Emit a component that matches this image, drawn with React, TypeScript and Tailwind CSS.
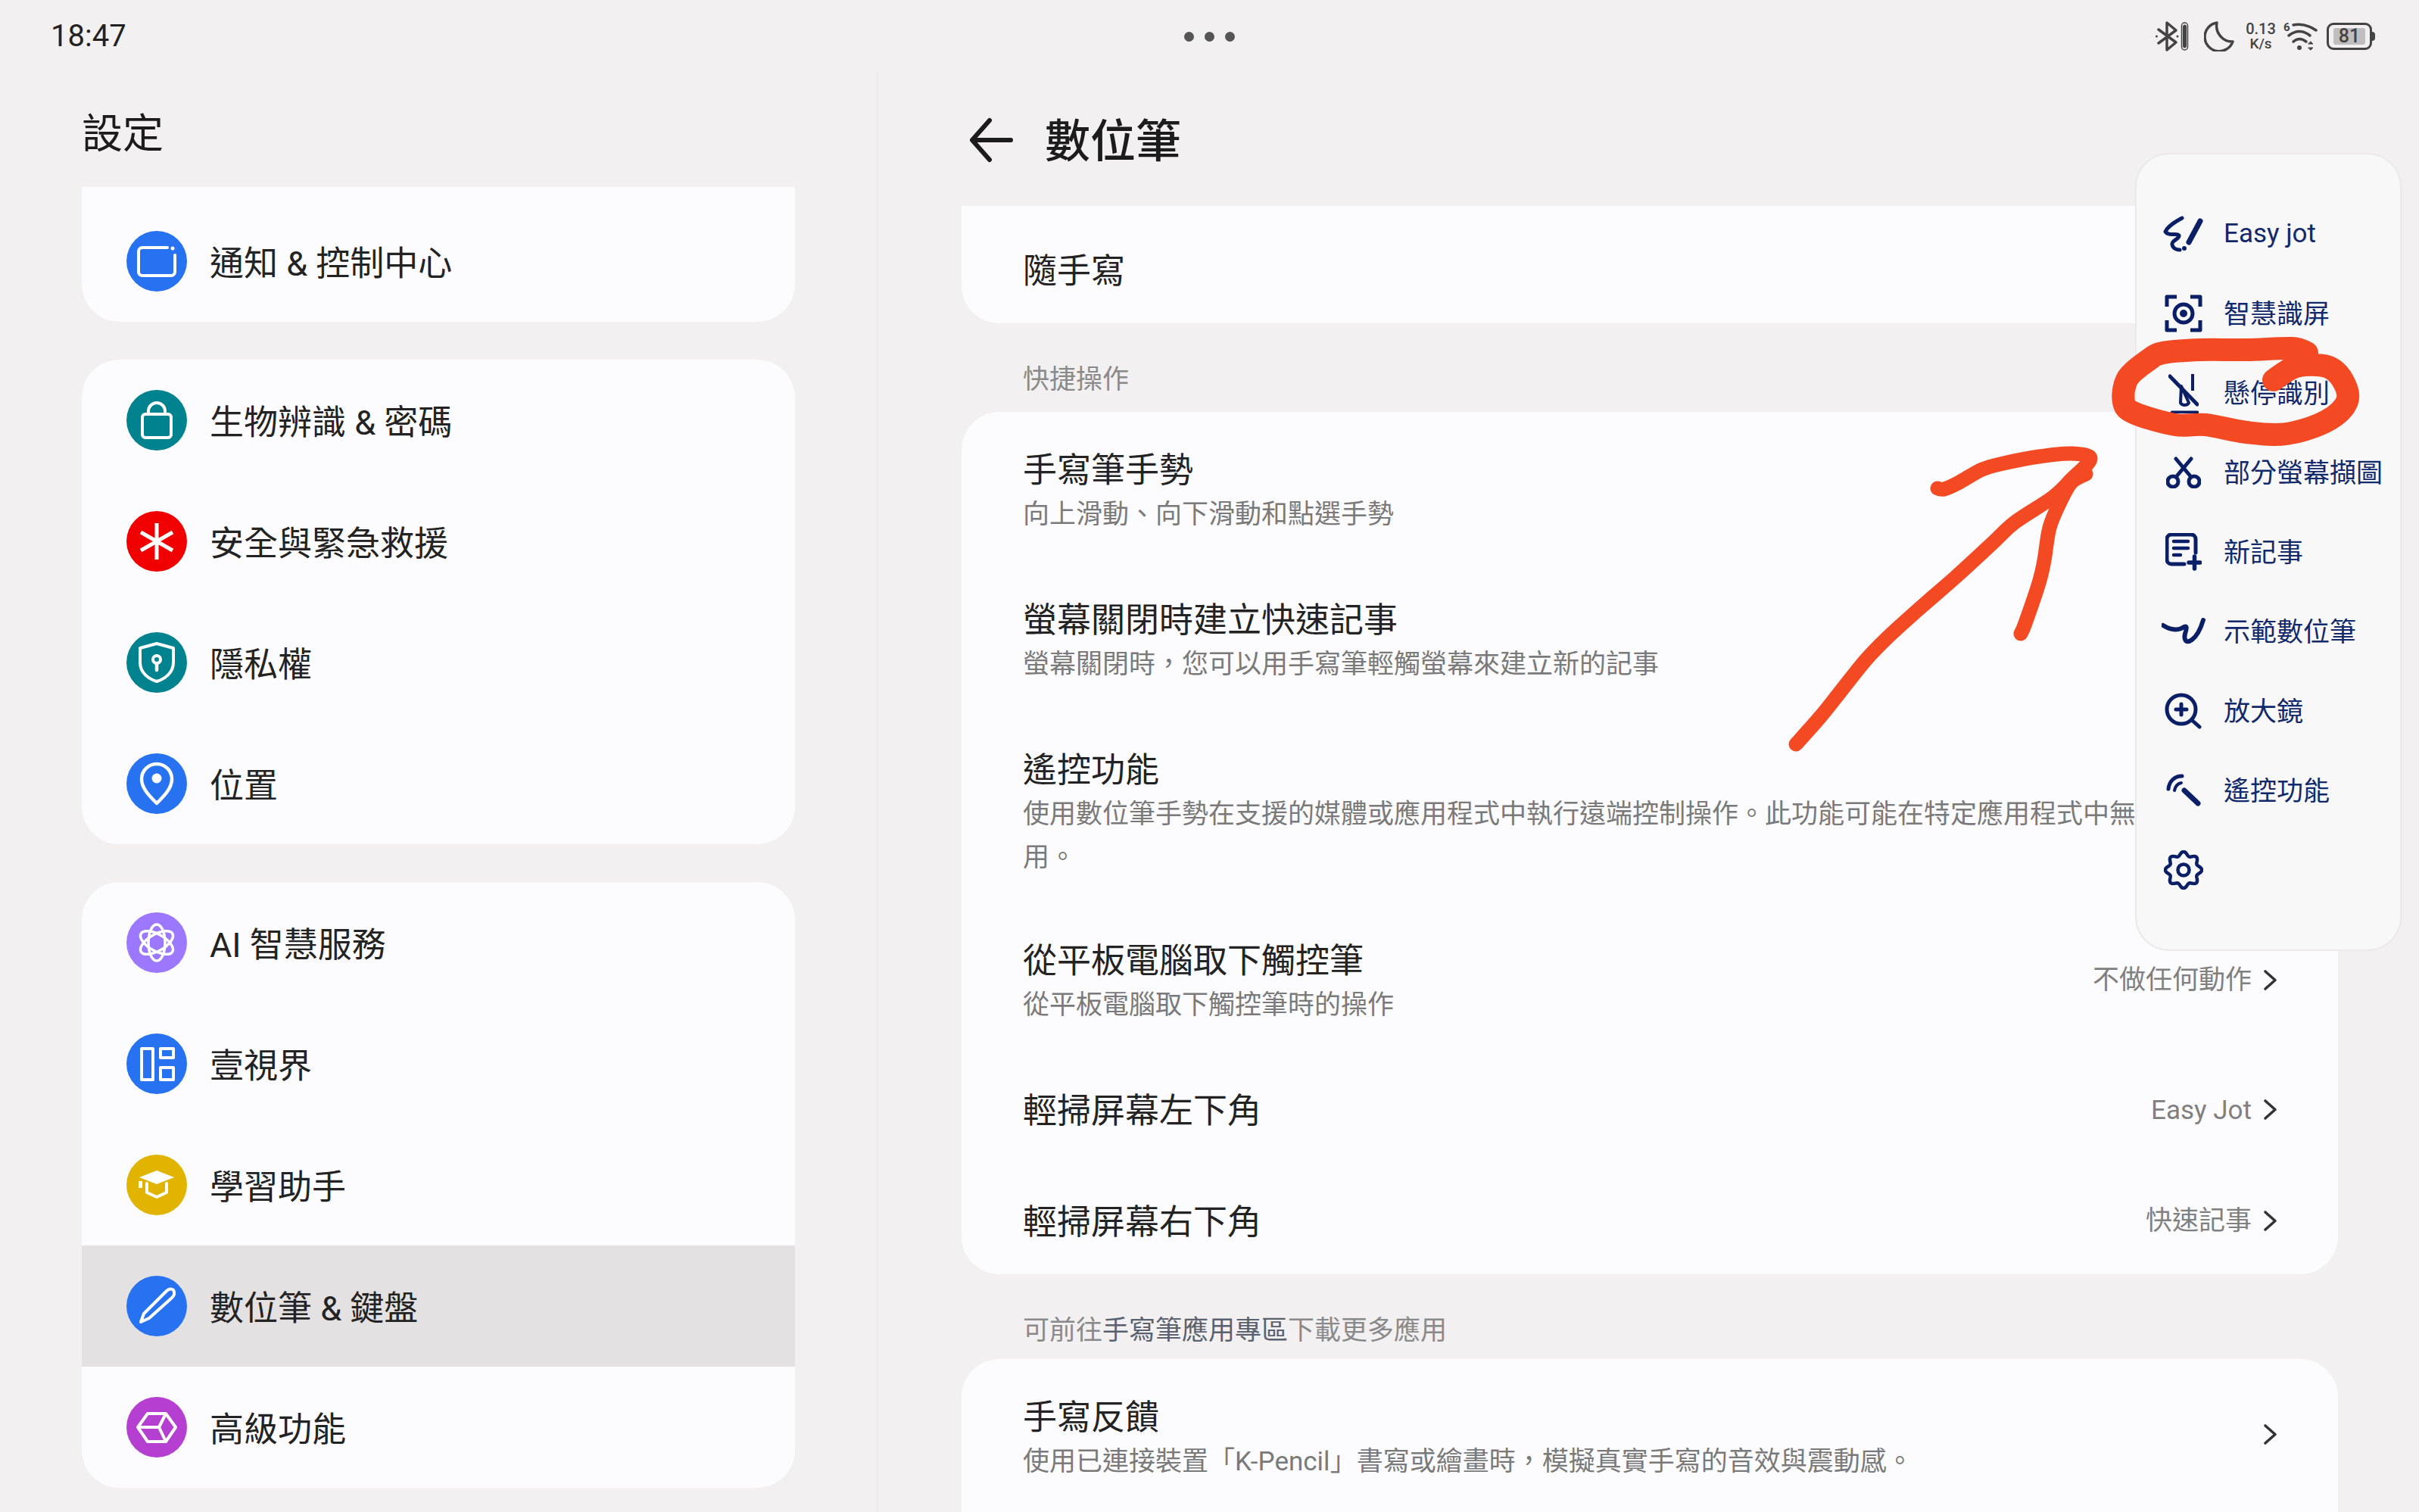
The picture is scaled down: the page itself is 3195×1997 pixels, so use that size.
import React from "react";

const FONT = "font-['Roboto','Noto_Sans_CJK_TC',sans-serif]";

// smooth hand-drawn stroke through a list of points (catmull-rom to bezier)
function smooth(p: number[][]) {
  let d = `M ${p[0][0]} ${p[0][1]}`;
  for (let i = 0; i < p.length - 1; i++) {
    const a = p[Math.max(i - 1, 0)];
    const b = p[i];
    const c = p[i + 1];
    const e = p[Math.min(i + 2, p.length - 1)];
    const c1x = b[0] + (c[0] - a[0]) / 6;
    const c1y = b[1] + (c[1] - a[1]) / 6;
    const c2x = c[0] - (e[0] - b[0]) / 6;
    const c2y = c[1] - (e[1] - b[1]) / 6;
    d += ` C ${c1x} ${c1y} ${c2x} ${c2y} ${c[0]} ${c[1]}`;
  }
  return d;
}

const circleStroke = smooth([
  [3047, 466], [3027, 460], [2967, 462], [2907, 462], [2857, 466], [2837, 476], [2810, 500],
  [2805, 531], [2820, 546], [2873, 561], [2913, 561], [2967, 571], [3020, 573], [3073, 556],
  [3100, 530], [3094, 502], [3073, 484], [3033, 484], [3003, 502],
]);
const arrowMain = smooth([
  [2372, 983], [2404, 947], [2432, 912], [2464, 872], [2493, 842], [2536, 803], [2582, 763],
  [2632, 717], [2661, 690], [2711, 657], [2736, 633], [2761, 606], [2736, 599], [2693, 603],
  [2646, 612], [2618, 620], [2586, 638], [2568, 646], [2559, 645],
]);
const arrowBarb = smooth([
  [2755, 626], [2736, 637], [2721, 663], [2707, 697], [2700, 740], [2693, 770], [2675, 823], [2669, 837],
]);

const gearPath = (() => {
  let d = "";
  for (let i = 0; i <= 96; i++) {
    const t = (i / 96) * Math.PI * 2;
    const r = 21.5 + 2.6 * Math.cos(8 * t);
    d += `${i === 0 ? "M" : "L"} ${(26 + r * Math.cos(t)).toFixed(2)} ${(26 + r * Math.sin(t)).toFixed(2)} `;
  }
  return d + "Z";
})();

type Glyph = { bg: string; el: React.ReactNode };

const G = {
  notify: (
    <>
      <path d="M54 22 H21 a5 5 0 0 0 -5 5 V54 a5 5 0 0 0 5 5 H59 a5 5 0 0 0 5 -5 V32" />
      <circle cx="61" cy="23" r="2.5" fill="white" stroke="none" />
    </>
  ),
  lock: (
    <>
      <rect x="21" y="32" width="38" height="31" rx="4" />
      <path d="M29 32 V28 a11 11 0 0 1 22 0 V32" />
    </>
  ),
  star: (
    <g strokeWidth="5" strokeLinecap="butt">
      <path d="M40 16 V64 M19 28 L61 52 M61 28 L19 52" />
    </g>
  ),
  shield: (
    <>
      <path d="M40 15 L62 21 V40 C62 54 50 62 40 65 C30 62 18 54 18 40 V21 Z" />
      <circle cx="40" cy="36" r="5" />
      <path d="M40 41 V50" strokeWidth="4.5" />
    </>
  ),
  pin: (
    <>
      <path d="M40 66 C30 56 20 46 20 34 a20 20 0 0 1 40 0 C60 46 50 56 40 66 Z" strokeWidth="4.5" />
      <circle cx="40" cy="33" r="6.5" fill="white" stroke="none" />
    </>
  ),
  atom: (
    <g strokeWidth="3.5">
      <ellipse cx="40" cy="40" rx="24" ry="11" transform="rotate(90 40 40)" />
      <ellipse cx="40" cy="40" rx="24" ry="11" transform="rotate(30 40 40)" />
      <ellipse cx="40" cy="40" rx="24" ry="11" transform="rotate(150 40 40)" />
    </g>
  ),
  panels: (
    <>
      <rect x="20" y="20" width="15" height="41" />
      <rect x="45" y="20" width="17" height="12" />
      <rect x="45" y="45" width="17" height="16" />
    </>
  ),
  cap: (
    <>
      <path d="M40 21 L63 30 L40 39 L17 30 Z" fill="white" stroke="none" />
      <path d="M27 38 V50 L40 56 L53 50 V38" />
      <rect x="16" y="35" width="5" height="9" fill="white" stroke="none" />
    </>
  ),
  pen: (
    <path d="M19 61 L23 50 L53 20 C57 16 63 17 63 22 C64 26 61 28 59 30 L30 56 Z" strokeLinejoin="round" />
  ),
  box: (
    <path d="M15 40 L28 22 H52 L65 40 L52 59 H28 Z M15 40 H43 L52 22 M43 40 L52 59" />
  ),
};

function Circle({ bg, el }: Glyph) {
  return (
    <div className={`h-20 w-20 shrink-0 rounded-full ${bg}`}>
      <svg width="80" height="80" viewBox="0 0 80 80" fill="none" stroke="white" strokeWidth="4" strokeLinecap="round" strokeLinejoin="round">
        {el}
      </svg>
    </div>
  );
}

function NavRow({ g, label, active }: { g: Glyph; label: string; active?: boolean }) {
  return (
    <div className={`flex h-40 items-center gap-[30px] pl-[59px] ${active ? "bg-[#e3e1e2]" : ""}`}>
      <Circle {...g} />
      <span className="pt-[6px] text-[45px] leading-none text-[#232323]">{label}</span>
    </div>
  );
}

const NAVY = "#0b1f66";

const quickIcons: { w: number; h: number; el: React.ReactNode }[] = [
  {
    w: 54,
    h: 48,
    el: (
      <>
        <path d="M25 3 C14 9 6 14 3 21 C8 28 18 22 21 26 C22 31 11 32 12 38 C13 43 18 45 22 45" strokeWidth="5" />
        <path d="M49 7 L34 35" strokeWidth="7" />
        <circle cx="28" cy="43" r="3" fill={NAVY} stroke="none" />
      </>
    ),
  },
  {
    w: 50,
    h: 50,
    el: (
      <>
        <path d="M16 3 H3 V16 M34 3 H47 V16 M3 34 V47 H16 M47 34 V47 H34" strokeWidth="5" strokeLinecap="butt" />
        <circle cx="25" cy="25" r="12" strokeWidth="5" />
        <circle cx="25" cy="25" r="5" fill={NAVY} stroke="none" />
      </>
    ),
  },
  {
    w: 40,
    h: 54,
    el: (
      <>
        <path d="M2 5 L38 42" strokeWidth="5" />
        <path d="M32 2 V24" strokeWidth="4" strokeLinecap="butt" />
        <path d="M17 18 L27 40 C25 44 18 44 16 40 Z" strokeWidth="4" fill="none" />
        <path d="M5 53 H38" strokeWidth="5" />
      </>
    ),
  },
  {
    w: 46,
    h: 42,
    el: (
      <>
        <circle cx="9" cy="33" r="7" strokeWidth="5" />
        <circle cx="37" cy="33" r="7" strokeWidth="5" />
        <path d="M13 27 L33 3 M33 27 L13 3" strokeWidth="5" />
      </>
    ),
  },
  {
    w: 48,
    h: 50,
    el: (
      <>
        <path d="M25 41 H8 a6 6 0 0 1 -6 -6 V8 a6 6 0 0 1 6 -6 H34 a6 6 0 0 1 6 6 V26" strokeWidth="5" />
        <path d="M11 11 H30 M11 20 H30 M11 29 H20" strokeWidth="4.5" />
        <path d="M31 39 H46 M38.5 31 V47" strokeWidth="5.5" />
      </>
    ),
  },
  {
    w: 58,
    h: 36,
    el: (
      <path d="M2 10 C10 15 18 17 26 14 C34 9 34 12 31 21 C29 30 33 34 40 29 C47 24 52 13 55 3" strokeWidth="6" />
    ),
  },
  {
    w: 50,
    h: 48,
    el: (
      <>
        <circle cx="22" cy="22" r="19" strokeWidth="5" />
        <path d="M37 37 L46 45" strokeWidth="5" />
        <path d="M15 22 H29 M22 15 V29" strokeWidth="5" />
      </>
    ),
  },
  {
    w: 46,
    h: 44,
    el: (
      <>
        <path d="M24 22 L42 39" strokeWidth="7" />
        <path d="M3 20 C4 10 11 3 21 3" strokeWidth="5" />
        <path d="M11 22 C12 17 15 13 20 12" strokeWidth="4" />
      </>
    ),
  },
  {
    w: 52,
    h: 52,
    el: (
      <>
        <path d={gearPath} strokeWidth="4.5" />
        <circle cx="26" cy="26" r="7.5" strokeWidth="4.5" />
      </>
    ),
  },
];

const quickLabels = ["Easy jot", "智慧識屏", "懸停識別", "部分螢幕擷圖", "新記事", "示範數位筆", "放大鏡", "遙控功能", ""];

function QuickPanel() {
  return (
    <div className="absolute left-[2820px] top-[202px] h-[1054px] w-[352px] rounded-[45px] border-2 border-[#ebe9ea] bg-[#f8f8f9] pt-[52px]">
      {quickLabels.map((label, i) => (
        <div key={i} className="flex h-[105px] items-center pl-[26px]">
          <div className="flex w-[72px] shrink-0 items-center justify-center">
            <svg width={quickIcons[i].w} height={quickIcons[i].h} viewBox={`0 0 ${quickIcons[i].w} ${quickIcons[i].h}`} fill="none" stroke={NAVY} strokeLinecap="round" strokeLinejoin="round">
              {quickIcons[i].el}
            </svg>
          </div>
          <span className={`ml-[17px] whitespace-nowrap text-[35px] leading-none text-[#12296b] ${i > 0 ? "pt-[4px]" : ""}`}>{label}</span>
        </div>
      ))}
    </div>
  );
}

function StatusIcons() {
  const c = "#444";
  return (
    <div className="flex items-center">
      <svg width="44" height="40" viewBox="0 0 44 40" fill="none" stroke={c} strokeWidth="3.5" strokeLinecap="round" strokeLinejoin="round">
        <path d="M4 11 L27 28 L15 38 V2 L27 12 L4 29" />
        <circle cx="1.5" cy="20" r="1.5" fill={c} stroke="none" />
        <circle cx="29" cy="20" r="1.5" fill={c} stroke="none" />
        <rect x="34.5" y="2" width="8" height="36" rx="4" strokeWidth="1.5" />
        <rect x="36.5" y="5" width="4" height="30" rx="2" fill={c} strokeWidth="1" />
      </svg>
      <svg className="ml-[20px]" width="40" height="40" viewBox="0 0 40 40" fill="none" stroke={c} strokeWidth="3.5" strokeLinejoin="round">
        <path d="M17 2 A19 19 0 1 0 38 27 A21 21 0 0 1 17 2 Z" />
      </svg>
      <div className="ml-[15px] flex w-[40px] flex-col items-center text-[20px] font-medium leading-[20px] text-[#444]">
        <span>0.13</span>
        <span className="text-[19px]">K/s</span>
      </div>
      <svg className="ml-[10px]" width="46" height="40" viewBox="0 0 46 40" fill="none" stroke={c} strokeWidth="3.5" strokeLinecap="round">
        <text x="0" y="13" fontSize="15" fontWeight="700" fill={c} stroke="none">6</text>
        <path d="M13 5 Q28 2 43 12" />
        <path d="M7 19 Q21 8 35 19" />
        <path d="M13 27 Q21 20 30 27" />
        <circle cx="21" cy="35" r="3" fill={c} stroke="none" />
        <path d="M36 27 L39 30 H33 Z M36 38 L39 35 H33 Z" fill={c} strokeWidth="1" />
      </svg>
      <div className="ml-[11px] flex items-center">
        <div className="flex h-[36px] w-[60px] items-center justify-center rounded-[9px] border-[3.5px] border-[#444]">
          <div className="flex h-[22px] w-[42px] items-center justify-center rounded-[3px] bg-[#c0bebf] text-[25px] font-medium text-[#444]">81</div>
        </div>
        <div className="h-[12px] w-[4px] rounded-r-full bg-[#444]" />
      </div>
    </div>
  );
}

function StatusBar() {
  return (
    <div className="grid h-24 grid-cols-3 items-center pl-[67px] pr-[58px]">
      <span className="text-[40px] leading-none text-[#222]">18:47</span>
      <div className="flex justify-center gap-[14px] pr-[9px]">
        <div className="h-[13px] w-[13px] rounded-full bg-[#555]" />
        <div className="h-[13px] w-[13px] rounded-full bg-[#555]" />
        <div className="h-[13px] w-[13px] rounded-full bg-[#555]" />
      </div>
      <div className="flex justify-end">
        <StatusIcons />
      </div>
    </div>
  );
}

function Sidebar() {
  return (
    <div className="w-[1160px] shrink-0 border-r-2 border-[#ecebec] pl-[108px] pr-[108px]">
      <div className="flex h-[151px] items-center pt-[13px] text-[54px] leading-none text-[#1c1c1c]">設定</div>
      <div className="rounded-b-[50px] bg-[#fcfcfe] pt-[18px]">
        <NavRow g={{ bg: "bg-[#2772f0]", el: G.notify }} label="通知 & 控制中心" />
      </div>
      <div className="mt-[50px] overflow-hidden rounded-[50px] bg-[#fcfcfe]">
        <NavRow g={{ bg: "bg-[#00838e]", el: G.lock }} label="生物辨識 & 密碼" />
        <NavRow g={{ bg: "bg-[#f00000]", el: G.star }} label="安全與緊急救援" />
        <NavRow g={{ bg: "bg-[#00838e]", el: G.shield }} label="隱私權" />
        <NavRow g={{ bg: "bg-[#2772f0]", el: G.pin }} label="位置" />
      </div>
      <div className="mt-[50px] overflow-hidden rounded-[50px] bg-[#fcfcfe]">
        <NavRow g={{ bg: "bg-[#9b78ff]", el: G.atom }} label="AI 智慧服務" />
        <NavRow g={{ bg: "bg-[#2772f0]", el: G.panels }} label="壹視界" />
        <NavRow g={{ bg: "bg-[#e0b400]", el: G.cap }} label="學習助手" />
        <NavRow g={{ bg: "bg-[#2772f0]", el: G.pen }} label="數位筆 & 鍵盤" active />
        <NavRow g={{ bg: "bg-[#b53fd0]", el: G.box }} label="高級功能" />
      </div>
    </div>
  );
}

function Chevron() {
  return (
    <svg className="ml-[14px] shrink-0" width="20" height="32" viewBox="0 0 20 32" fill="none" stroke="#333" strokeWidth="3.6" strokeLinecap="round" strokeLinejoin="round">
      <path d="M4 4 L17 15.5 L4 27" />
    </svg>
  );
}

function SettingRow({ title, sub, value, arrow, box, lift = "" }: { title: string; sub?: string; value?: string; arrow?: boolean; box: string; lift?: string }) {
  return (
    <div className={`flex items-center pl-[81px] pr-[80px] ${box}`}>
      <div className="flex-1">
        <div className={`text-[45px] leading-[58px] text-[#232323] ${sub ? "" : "pt-[4px]"}`}>{title}</div>
        {sub && <div className="max-w-[1560px] text-[35px] leading-[57px] text-[#7a7a7a]">{sub}</div>}
      </div>
      <div className={`flex items-center ${lift}`}>
        {value && <span className="text-[35px] leading-none text-[#808080]">{value}</span>}
        {arrow && <Chevron />}
      </div>
    </div>
  );
}

function SectionLabel({ children, bottom }: { children: React.ReactNode; bottom: string }) {
  return <div className={`mt-[48px] h-[50px] pl-[81px] text-[35px] leading-[54px] text-[#8a8a8a] ${bottom}`}>{children}</div>;
}

function Detail() {
  return (
    <div className="min-w-0 flex-1 pl-[110px] pr-[107px]">
      <div className="flex h-[176px] items-center pt-[2px]">
        <svg className="ml-[10px]" width="60" height="60" viewBox="0 0 60 60" fill="none" stroke="#1c1c1c" strokeWidth="6" strokeLinecap="round" strokeLinejoin="round">
          <path d="M55 30 H5 M27 4 L4 30 L27 56" />
        </svg>
        <span className="ml-[40px] pt-[6px] text-[60px] font-medium leading-none text-[#1c1c1c]">數位筆</span>
      </div>
      <div className="flex h-[155px] items-center rounded-b-[50px] bg-[#fcfcfe] pl-[81px] pt-[17px] text-[45px] leading-none text-[#232323]">隨手寫</div>

      <SectionLabel bottom="mb-[19px]">快捷操作</SectionLabel>
      <div className="rounded-[50px] bg-[#fcfcfe]">
        <SettingRow box="pb-[34px] pt-[49px]" title="手寫筆手勢" sub="向上滑動、向下滑動和點選手勢" />
        <SettingRow box="pb-[34px] pt-[49px]" title="螢幕關閉時建立快速記事" sub="螢幕關閉時，您可以用手寫筆輕觸螢幕來建立新的記事" />
        <SettingRow box="pb-[31px] pt-[49px]" title="遙控功能" sub="使用數位筆手勢在支援的媒體或應用程式中執行遠端控制操作。此功能可能在特定應用程式中無法使用。" />
        <SettingRow box="pb-[34px] pt-[49px]" title="從平板電腦取下觸控筆" sub="從平板電腦取下觸控筆時的操作" value="不做任何動作" arrow lift="pb-[8px]" />
        <SettingRow box="h-[152px]" title="輕掃屏幕左下角" value="Easy Jot" arrow />
        <SettingRow box="h-[141px]" title="輕掃屏幕右下角" value="快速記事" arrow />
      </div>

      <SectionLabel bottom="mb-[14px]">
        可前往<span className="text-[#5a6270]">手寫筆應用專區</span>下載更多應用
      </SectionLabel>
      <div className="h-[240px] rounded-t-[50px] bg-[#fcfcfe]">
        <SettingRow box="pb-[34px] pt-[49px]" title="手寫反饋" sub="使用已連接裝置「K-Pencil」書寫或繪畫時，模擬真實手寫的音效與震動感。" arrow lift="pb-[14px]" />
      </div>
    </div>
  );
}

export default function App() {
  return (
    <div className={`relative h-[1997px] w-[3195px] overflow-hidden bg-[#f2f0f1] ${FONT}`}>
      <StatusBar />
      <div className="flex">
        <Sidebar />
        <Detail />
      </div>
      <QuickPanel />
      {/* red pen annotation drawn over the screenshot */}
      <svg className="pointer-events-none absolute inset-0" width="3195" height="1997" viewBox="0 0 3195 1997" fill="none" stroke="#f44a24" strokeLinecap="round" strokeLinejoin="round">
        <path d={circleStroke} strokeWidth="30" />
        <path d={arrowMain} strokeWidth="19" />
        <path d={arrowBarb} strokeWidth="19" />
      </svg>
    </div>
  );
}
